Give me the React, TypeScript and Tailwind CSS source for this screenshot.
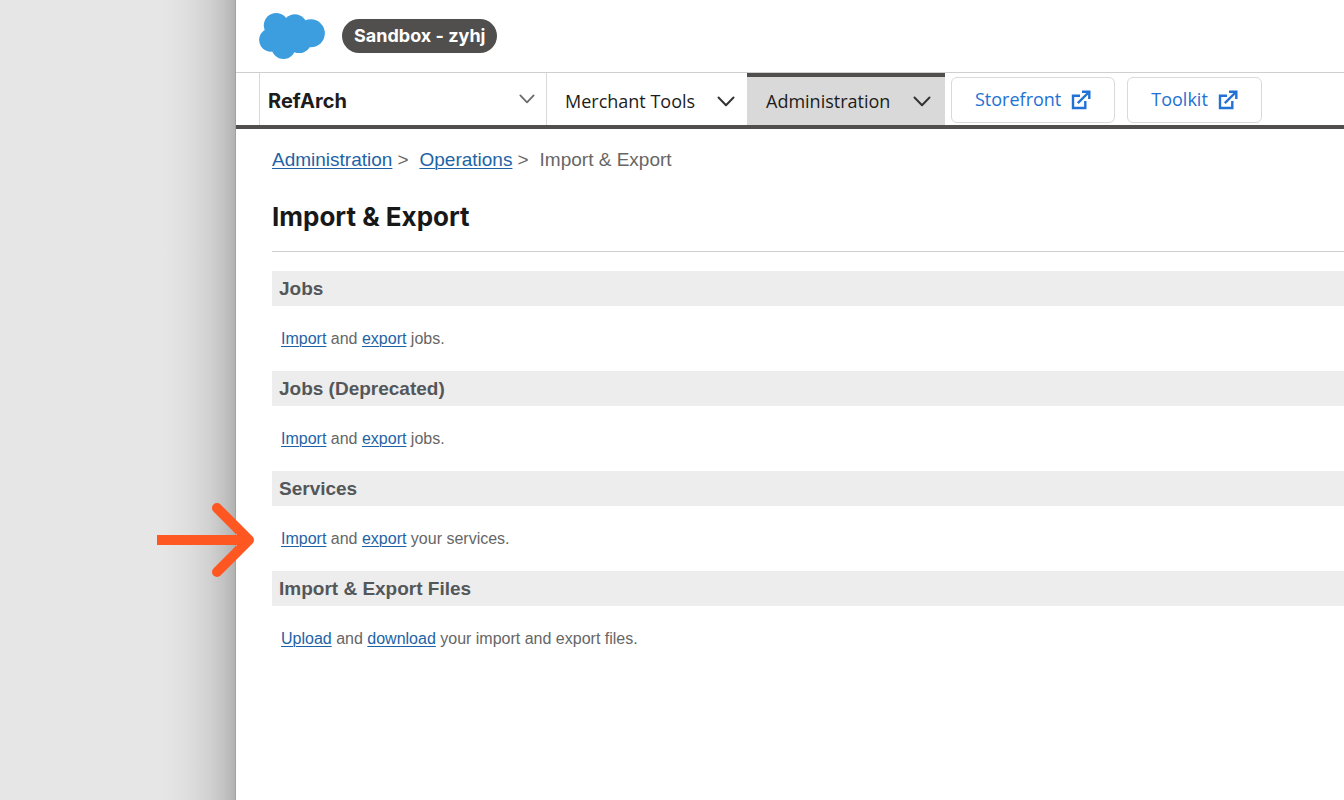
import { ReactNode } from "react";

interface SectionProps {
    title: string;
    children: ReactNode;
    marked?: boolean;
}

function CloudLogo() {
    return (
        <svg viewBox="70 39 197 138" className="w-[66px] h-[46px] fill-[#3c9edf]" aria-label="Salesforce">
            <circle cx="121" cy="76" r="37" />
            <circle cx="177" cy="79" r="36" />
            <circle cx="225" cy="100" r="42" />
            <circle cx="190" cy="122" r="37" />
            <circle cx="143" cy="141" r="36" />
            <circle cx="105" cy="120" r="35" />
            <path d="M100 90 L150 55 L225 80 L200 140 L150 150 L105 130 Z" />
        </svg>
    );
}

function Chevron({ className }: { className: string }) {
    return (
        <svg viewBox="0 0 18 11" fill="none" strokeWidth="2" strokeLinecap="round" strokeLinejoin="round" className={className}>
            <path d="M1.5 1.5 L9 9.2 L16.5 1.5" />
        </svg>
    );
}

function ExternalIcon() {
    return (
        <svg viewBox="0 0 20 20" fill="none" strokeWidth="2.4" className="w-5 h-5 stroke-[#2271d4]">
            <path d="M9 5.7 H2 V18 H14.3 V11" />
            <path d="M6.8 13.2 L17.5 2.5" />
            <path d="M11 1.7 H18.3 V9" />
        </svg>
    );
}

function Link({ children }: { children: ReactNode }) {
    return (
        <a href="#" className="text-[#1d63a5] underline decoration-1 underline-offset-2">
            {children}
        </a>
    );
}

function ToolLink({ label }: { label: string }) {
    return (
        <a
            href="#"
            className="flex items-center gap-[10px] h-[46px] px-[23px] border border-[#d9d9d9] rounded-md font-['Open_Sans',sans-serif] text-[18px] text-[#2271d4]"
        >
            {label}
            <ExternalIcon />
        </a>
    );
}

function Arrow() {
    return (
        <svg
            viewBox="0 0 98 74"
            fill="none"
            strokeWidth="10"
            className="absolute -left-[115px] -top-[3px] w-[98px] h-[74px] stroke-[#ff5722]"
        >
            <path d="M0 37 H90" />
            <path d="M60 5 L92 37 L60 69" strokeLinecap="round" strokeLinejoin="round" />
        </svg>
    );
}

function Section({ title, children, marked }: SectionProps) {
    return (
        <section>
            <h2 className="h-[35px] px-[7px] bg-[#ededed] text-[19px]/[35px] font-bold text-[#54575a]">
                {title}
            </h2>
            <div className="relative h-[65px] px-[9px]">
                {marked && <Arrow />}
                <p className="pt-[20px] text-[16px]/[26px]">{children}</p>
            </div>
        </section>
    );
}

export default function App() {
    return (
        <div className="flex min-h-screen overflow-hidden bg-[#e6e6e6]">
            <div className="flex justify-end shrink-0 w-[235px]">
                <div className="w-[72px] bg-[linear-gradient(to_right,#e6e6e6_0%,#dedede_35%,#d1d1d1_65%,#c2c2c2_85%,#b2b2b2_100%)]" />
            </div>
            <div className="flex-1 min-w-0 bg-white border-l border-[#a0a0a0] font-['Liberation_Sans',Arial,sans-serif] text-[#666]">
                <header className="flex items-center gap-[17px] h-[72px] pl-[23px]">
                    <CloudLogo />
                    <span className="px-3 rounded-full bg-[#514f4d] font-['Inter',sans-serif] text-[18px]/[34px] font-bold text-white">
                        Sandbox - zyhj
                    </span>
                </header>
                <nav className="flex h-[57px] pl-[23px] border-t border-t-[#cfcfcf] border-b-4 border-b-[#514f4d] text-[#1c1c1c]">
                    <div className="relative w-[288px] border-x border-[#d9d9d9]">
                        <select
                            aria-label="Site"
                            className="appearance-none w-full h-full pl-2 pt-1 font-['Inter',sans-serif] text-[20px] font-bold"
                        >
                            <option>RefArch</option>
                        </select>
                        <Chevron className="absolute right-[11px] top-[21px] w-4 h-[10px] stroke-[#6b6b6b] pointer-events-none" />
                    </div>
                    <button className="flex items-center justify-between w-[200px] pl-[18px] pr-[12px] border-t-4 border-transparent font-['Open_Sans',sans-serif] text-[18px]">
                        Merchant Tools
                        <Chevron className="w-[18px] h-[11px] stroke-[#333]" />
                    </button>
                    <button className="flex items-center justify-between w-[198px] pl-[19px] pr-[14px] border-t-4 border-[#514f4d] bg-[#d9d9d9] font-['Open_Sans',sans-serif] text-[18px]">
                        Administration
                        <Chevron className="w-[18px] h-[11px] stroke-[#333]" />
                    </button>
                    <div className="flex items-center gap-3 pl-[6px] pt-px">
                        <ToolLink label="Storefront" />
                        <ToolLink label="Toolkit" />
                    </div>
                </nav>
                <main className="pl-9">
                    <div className="flex pt-[18px] text-[19px]/[26px]">
                        <Link>Administration</Link>
                        <span className="pl-[5px] pr-[11px]">&gt;</span>
                        <Link>Operations</Link>
                        <span className="pl-[5px] pr-[11px]">&gt;</span>
                        <span>Import &amp; Export</span>
                    </div>
                    <h1 className="pt-[28px] pb-[18px] mb-[19px] border-b border-[#cfcfcf] font-['Inter',sans-serif] text-[26px]/[32px] font-bold text-[#181818]">
                        Import &amp; Export
                    </h1>
                    <Section title="Jobs">
                        <Link>Import</Link> and <Link>export</Link> jobs.
                    </Section>
                    <Section title="Jobs (Deprecated)">
                        <Link>Import</Link> and <Link>export</Link> jobs.
                    </Section>
                    <Section title="Services" marked>
                        <Link>Import</Link> and <Link>export</Link> your services.
                    </Section>
                    <Section title="Import &amp; Export Files">
                        <Link>Upload</Link> and <Link>download</Link> your import and export files.
                    </Section>
                </main>
            </div>
        </div>
    );
}
